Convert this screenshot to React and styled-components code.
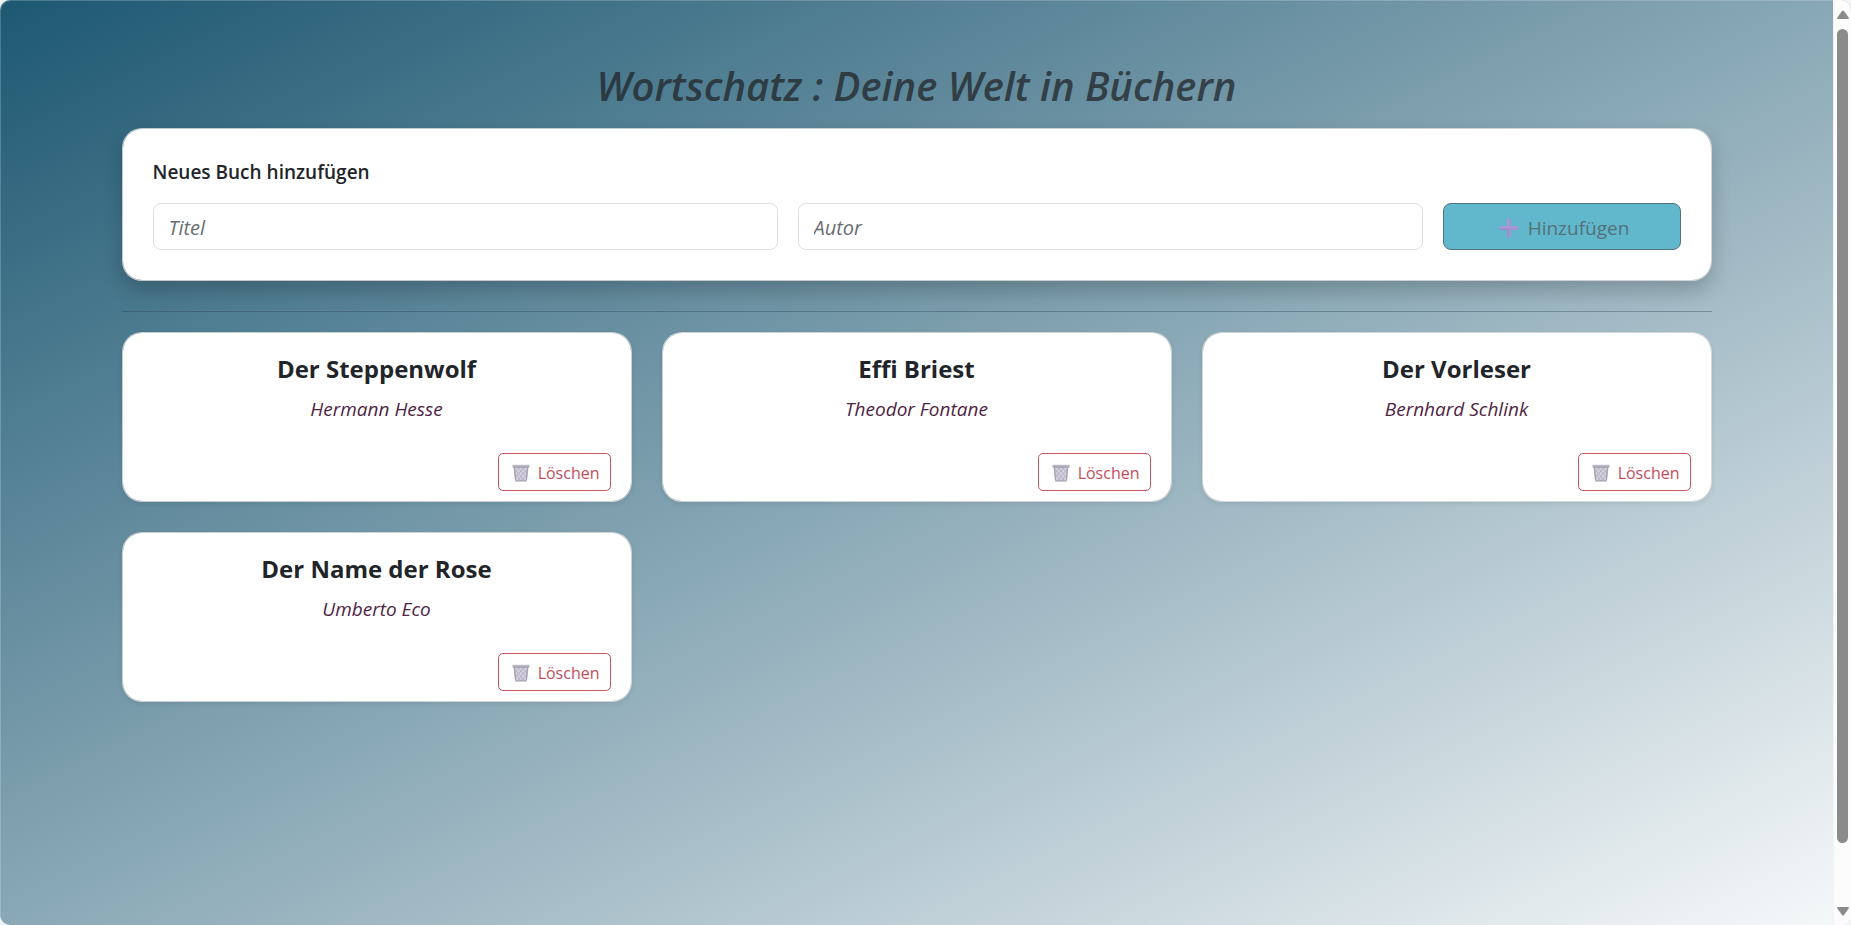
import React, { useState } from "react";
import styled, { createGlobalStyle } from "styled-components";

const GlobalStyle = createGlobalStyle`
  *, *::before, *::after { box-sizing: border-box; }
  html { background: #f1f4f5; scrollbar-width: none; }
  body {
    margin: 0;
    color: #212529;
    font-family: "Segoe UI", "Open Sans", "Noto Sans", sans-serif;
    font-size: 19px;
    line-height: 30px;
  }
`;

const Page = styled.div`
  display: flex;
  min-height: 100vh;
  border-radius: 10px;
  overflow: hidden;
  background: linear-gradient(to bottom right, #1d5872, #ffffff 104%);
  box-shadow: inset 1px 1px 0 rgba(255, 255, 255, 0.2);
`;

const Main = styled.main`
  flex: 1;
  max-width: 1650px;
  min-width: 0;
  margin: 0 auto;
  padding: 62px 30px 60px;
`;

const Heading = styled.h1`
  margin: 0 0 18px;
  color: #212529;
  opacity: 0.75;
  font-size: 40px;
  font-style: italic;
  font-weight: 600;
  line-height: 48px;
  text-align: center;
`;

const Card = styled.section`
  background: #fff;
  background-clip: padding-box;
  border: 1px solid rgba(225, 225, 225, 0.8);
  border-radius: 20px;
`;

const FormCard = styled(Card)`
  padding: 28px 30px 30px;
  box-shadow: 0 10px 20px rgba(0, 0, 0, 0.2);
`;

const FormTitle = styled.h2`
  margin: 0 0 16px;
  font-size: 19px;
  font-weight: 600;
  line-height: 30px;
`;

const Form = styled.form`
  display: grid;
  grid-template-columns: repeat(12, minmax(0, 1fr));
  column-gap: 20px;
`;

const TextInput = styled.input`
  grid-column: span 5;
  min-width: 0;
  height: 47px;
  padding: 2px 15px 0;
  border: 1px solid #dee2e6;
  border-radius: 8px;
  background: #fff;
  color: #212529;
  font: inherit;
  font-size: 20px;
  font-style: italic;
  &::placeholder { color: #696d71; opacity: 1; }
`;

const AddButton = styled.button`
  grid-column: span 2;
  display: flex;
  align-items: center;
  justify-content: center;
  gap: 9px;
  height: 47px;
  padding: 2px 15px 0 20px;
  border: 1px solid #53727a;
  border-radius: 8px;
  background: #61b7cc;
  color: #53727a;
  font: inherit;
`;

const Divider = styled.hr`
  margin: 30px 0 20px;
  border: 0;
  border-top: 1px solid rgba(33, 55, 75, 0.35);
`;

const BookGrid = styled.div`
  display: grid;
  grid-template-columns: repeat(3, minmax(0, 1fr));
  gap: 30px;
`;

const BookCard = styled(Card)`
  display: flex;
  flex-direction: column;
  height: 170px;
  padding: 21px 20px 10px;
  box-shadow: 0 2px 5px rgba(0, 0, 0, 0.08);
  text-align: center;
`;

const BookTitle = styled.h3`
  margin: 0 0 10px;
  font-size: 24px;
  font-weight: 700;
  line-height: 30px;
`;

const Author = styled.p`
  margin: 0;
  color: #4f2444;
  font-style: italic;
  line-height: 30px;
`;

const DeleteButton = styled.button`
  display: flex;
  align-items: center;
  align-self: flex-end;
  gap: 8px;
  height: 38px;
  margin-top: auto;
  padding: 1px 10px 0 13px;
  border: 1px solid #c95664;
  border-radius: 5px;
  background: #fff;
  color: #c44d5b;
  font: inherit;
  font-size: 16px;
`;

const ScrollRail = styled.aside`
  display: flex;
  flex: none;
  flex-direction: column;
  align-items: center;
  width: 18px;
  height: 100vh;
  padding: 10px 0 9px;
  border-left: 1px solid #f1f4f5;
  background: #fcfcfc;
`;

const ScrollThumb = styled.div`
  flex: 1;
  width: 11px;
  margin: 9px 0 63px;
  border-radius: 6px;
  background: #8b8b8b;
`;

const Arrow = ({ down }) => (
  <svg width="14" height="10" viewBox="0 0 14 10" aria-hidden="true">
    <path d={down ? "M1 2Q1 1 2 1H12Q13 1 13 2L8 9Q7 10 6 9Z" : "M1 8Q1 9 2 9H12Q13 9 13 8L8 1Q7 0 6 1Z"} fill="#8b8b8b" />
  </svg>
);

const PlusIcon = () => (
  <svg width="20" height="20" viewBox="0 0 20 20" aria-hidden="true">
    <path d="M8.3 1.2Q8.3.5 9 .5h2q.7 0 .7.7v7.1h7.1q.7 0 .7.7v2q0 .7-.7.7h-7.1v7.1q0 .7-.7.7H9q-.7 0-.7-.7v-7.1H1.2q-.7 0-.7-.7V9q0-.7.7-.7h7.1z" fill="#a98fd4" />
    <path d="M9.3 1v8.2H1M11 9.2h8" fill="none" stroke="#b99bdb" strokeWidth="1" />
    <path d="M1 11.4h7.6V19" fill="none" stroke="#9586c0" strokeWidth=".7" />
  </svg>
);

const BasketIcon = () => (
  <svg width="18" height="18" viewBox="0 0 20 18" preserveAspectRatio="none" aria-hidden="true">
    <path d="M2 2h16l-1.500 15h-13z" fill="#d4d1dd" />
    <path d="M3 5l11 12M3.500 10l7 7M6 3l10 10M11 3l6 6M17 5L6 17M17 10l-6.500 7M14 3L4 13M9 3L3 9" fill="none" stroke="#b5b1c3" strokeWidth="1" />
    <path d="M2.500 3.500L4 16M17.500 3.500L16 16" stroke="#a5a1b4" strokeWidth="1.500" />
    <path d="M.5 .8h19v2.200H.5z" fill="#bab7c5" />
    <path d="M1 3.200h18M3.500 17h13" stroke="#9692a3" strokeWidth="1" />
  </svg>
);

const initialBooks = [
  { title: "Der Steppenwolf", author: "Hermann Hesse" },
  { title: "Effi Briest", author: "Theodor Fontane" },
  { title: "Der Vorleser", author: "Bernhard Schlink" },
  { title: "Der Name der Rose", author: "Umberto Eco" },
];

export default function App() {
  const [books, setBooks] = useState(initialBooks);
  const [title, setTitle] = useState("");
  const [author, setAuthor] = useState("");

  const addBook = (event) => {
    event.preventDefault();
    if (!title.trim() || !author.trim()) return;
    setBooks([...books, { title, author }]);
    setTitle("");
    setAuthor("");
  };

  return (
    <>
      <GlobalStyle />
      <Page>
        <Main>
          <Heading>Wortschatz : Deine Welt in Büchern</Heading>
          <FormCard>
            <FormTitle>Neues Buch hinzufügen</FormTitle>
            <Form onSubmit={addBook}>
              <TextInput aria-label="Titel" placeholder="Titel" value={title} onChange={(e) => setTitle(e.target.value)} />
              <TextInput aria-label="Autor" placeholder="Autor" value={author} onChange={(e) => setAuthor(e.target.value)} />
              <AddButton type="submit"><PlusIcon />Hinzufügen</AddButton>
            </Form>
          </FormCard>
          <Divider />
          <BookGrid>
            {books.map((book) => (
              <BookCard as="article" key={book.title}>
                <BookTitle>{book.title}</BookTitle>
                <Author>{book.author}</Author>
                <DeleteButton type="button" onClick={() => setBooks(books.filter((b) => b !== book))}>
                  <BasketIcon />Löschen
                </DeleteButton>
              </BookCard>
            ))}
          </BookGrid>
        </Main>
        <ScrollRail aria-hidden="true">
          <Arrow />
          <ScrollThumb />
          <Arrow down />
        </ScrollRail>
      </Page>
    </>
  );
}
